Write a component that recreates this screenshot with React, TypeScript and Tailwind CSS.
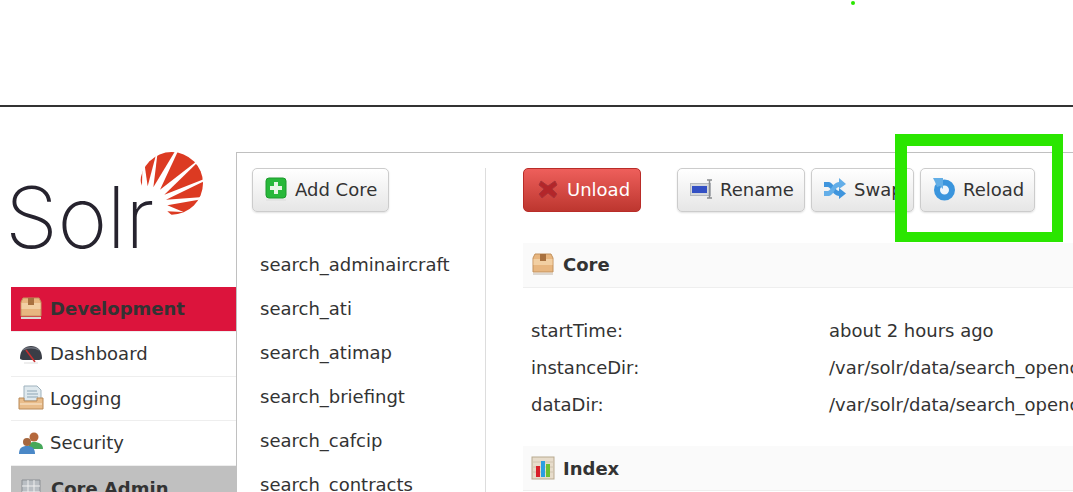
const font = "font-['DejaVu_Sans',sans-serif]";

function BoxIcon() {
  return (
    <svg width="24" height="24" viewBox="0 0 24 24">
      <path d="M2 6 L4 2 H20 L22 6 V20 H2 Z" fill="#e8b67f" stroke="#c2925e" strokeWidth="1" />
      <path d="M2.5 7 H21.5 V13 H2.5 Z" fill="#f2cfa2" />
      <path d="M9 2 H15 V9 H12 L9 9 Z" fill="#a8713f" />
      <path d="M2 22 H22" stroke="#dcd6cf" strokeWidth="2" />
    </svg>
  );
}

function GaugeIcon() {
  return (
    <svg width="26" height="24" viewBox="0 0 26 24">
      <path d="M2 17 C2 9 7 5 13 5 C19 5 24 9 24 17 C24 19 21 19 18 19 H8 C5 19 2 19 2 17 Z" fill="#3a3d46" />
      <path d="M5 9 C9 6 17 6 21 9" stroke="#70747e" strokeWidth="1.5" fill="none" />
      <path d="M8 9 L17 21" stroke="#c93030" strokeWidth="1.5" />
      <path d="M6 22 H20" stroke="#dddddd" strokeWidth="1" />
    </svg>
  );
}

function TrayIcon() {
  return (
    <svg width="26" height="26" viewBox="0 0 26 26">
      <path d="M6 1 H19 L23 5 V16 H6 Z" fill="#dfe9ee" stroke="#9fb2bd" strokeWidth="1" />
      <path d="M9 6 H19 M9 9 H20 M9 12 H20" stroke="#a9bcc7" strokeWidth="1.5" />
      <path d="M1 13 H6 V16 H19 V13 H25 V24 H1 Z" fill="#e9bd8b" stroke="#b98a58" strokeWidth="1" />
      <path d="M2 19 H24" stroke="#f5dcbc" strokeWidth="1.5" />
    </svg>
  );
}

function UsersIcon() {
  return (
    <svg width="26" height="26" viewBox="0 0 26 26">
      <circle cx="16" cy="7" r="4.5" fill="#b5683c" />
      <path d="M10 19 C10 13 13 12 16 12 C21 12 25 14 25 19 Z" fill="#46a85a" />
      <circle cx="9" cy="12" r="4" fill="#a5673f" />
      <path d="M1 24 C1 18 4 16 9 16 C14 16 17 18 17 24 Z" fill="#4a88c7" />
    </svg>
  );
}

function ServersIcon() {
  return (
    <svg width="24" height="24" viewBox="0 0 24 24">
      <path d="M3 3 H21 V24 H3 Z" fill="#b9bec3" stroke="#8b8f94" strokeWidth="1" />
      <path d="M3 9 H21 M3 15 H21 M9 3 V24 M15 3 V24" stroke="#f0f0f0" strokeWidth="1" />
    </svg>
  );
}

function PlusIcon() {
  return (
    <svg width="22" height="24" viewBox="0 0 22 24">
      <rect x="1" y="1" width="20" height="20" rx="3" fill="#28b83a" stroke="#1c9a2c" />
      <path d="M11 5 V17 M5 11 H17" stroke="#e8f6e4" strokeWidth="4" />
      <path d="M1 23 H21" stroke="#dcdcdc" strokeWidth="1" />
    </svg>
  );
}

function CrossIcon() {
  return (
    <svg width="22" height="22" viewBox="0 0 22 22">
      <path d="M4 3 L11 8 L18 3 L20 7 L15 11 L20 16 L17 20 L11 15 L5 20 L2 16 L7 11 L2 7 Z" fill="#b3262a" stroke="#a8343a" strokeWidth="1" />
    </svg>
  );
}

function RenameIcon() {
  return (
    <svg width="24" height="22" viewBox="0 0 24 22">
      <rect x="0.5" y="5.5" width="20" height="12" fill="#d5d8dc" stroke="#b4b9be" />
      <rect x="2" y="8" width="15" height="7" fill="#3350c4" />
      <path d="M17 2 H22 M19.5 2 V20 M17 20 H22" stroke="#8a8d90" strokeWidth="1.5" fill="none" />
    </svg>
  );
}

function SwapIcon() {
  return (
    <svg width="24" height="24" viewBox="0 0 24 24">
      <path d="M1 5 H6 C10 5 12 14 16 14 V11 L23 16.5 L16 22 V19 C10 19 8 10 5 10 H1 Z" fill="#3f95dd" />
      <path d="M1 14 H5 C8 14 10 5 16 5 V1 L23 7 L16 12 V10 C12 10 10 19 6 19 H1 Z" fill="#63aee8" />
    </svg>
  );
}

function ReloadIcon() {
  return (
    <svg width="24" height="24" viewBox="0 0 24 24">
      <circle cx="12.5" cy="13" r="7.5" fill="#eef6fc" stroke="#3a95dd" strokeWidth="6" />
      <path d="M1 1 H11 V12 L8 9 L5 10 L3 5 Z" fill="#62aee6" />
    </svg>
  );
}

function ChartIcon() {
  return (
    <svg width="24" height="24" viewBox="0 0 24 24">
      <rect x="1" y="1" width="22" height="22" fill="#e7dccb" stroke="#b8a98f" />
      <path d="M1 6 H23 M1 11 H23 M1 16 H23" stroke="#d0c4b0" />
      <rect x="5" y="10" width="4" height="11" fill="#d8202a" />
      <rect x="10" y="5" width="4" height="16" fill="#2a9fe0" />
      <rect x="15" y="8" width="4" height="13" fill="#6cc030" />
    </svg>
  );
}

function SolrLogo() {
  return (
    <div className="relative h-[135px] w-[225px]">
      <span className="absolute left-[-6px] top-[16px] font-['Inter',sans-serif] text-[85px] leading-[100px] font-[250] tracking-[-0.5px] text-[#26232e]">
        Solr
      </span>
      {/* sun, drawn in 3x coordinates */}
      <svg className="absolute left-[119px] top-[-4px]" width="80" height="72" viewBox="0 0 240 216">
        <defs>
          <clipPath id="sun">
            <circle cx="125" cy="106" r="94" />
          </clipPath>
        </defs>
        <g fill="#dc3a22" clipPath="url(#sun)">
          <path d="M36 113 L24 78 L37 66 Z" />
          <path d="M53 115 L44 52 L78 20 Z" />
          <path d="M70 118 L84 5 L138 5 Z" />
          <path d="M90 125 L146 5 L200 40 Z" />
          <path d="M103 140 L200 46 L230 90 Z" />
          <path d="M108 155 L230 96 L230 146 Z" />
          <path d="M112 172 L220 153 L180 200 Z" />
          <path d="M112 190 L170 193 L135 210 Z" />
        </g>
      </svg>
    </div>
  );
}

const navItems = [
  { label: "Dashboard", icon: <GaugeIcon />, size: "h-[45px] pb-[2px]" },
  { label: "Logging", icon: <TrayIcon />, size: "h-[44px] pb-[1px]" },
  { label: "Security", icon: <UsersIcon />, size: "h-[45px] pb-[1px]" },
];

const cores = [
  "search_adminaircraft",
  "search_ati",
  "search_atimap",
  "search_briefingt",
  "search_cafcip",
  "search_contracts",
];

const details = [
  ["startTime:", "about 2 hours ago"],
  ["instanceDir:", "/var/solr/data/search_opencalais"],
  ["dataDir:", "/var/solr/data/search_opencalais"],
];

function Btn({ icon, label, className }: { icon: React.ReactNode; label: string; className: string }) {
  return (
    <button className={`flex h-[44px] items-center rounded-[5px] border border-[#cccccc] bg-gradient-to-b from-white to-[#e6e6e6] pb-[2px] text-[18px] text-[#333333] shadow-[0_1px_2px_rgba(0,0,0,0.12)] ${className}`}>
      {icon}
      {label}
    </button>
  );
}

function SectionHead({ icon, label, className }: { icon: React.ReactNode; label: string; className?: string }) {
  return (
    <div className={`flex h-[45px] items-center gap-[8px] border-b border-[#eeeeee] bg-[#fafafa] pl-[8px] text-[18px] font-bold text-[#333333] ${className ?? ""}`}>
      {icon}
      {label}
    </div>
  );
}

export default function App() {
  return (
    <div className={`relative h-[492px] w-[1073px] overflow-hidden bg-white ${font}`}>
      {/* selection marks sit over the page */}
      <div className="absolute left-[851px] top-[1px] h-[4px] w-[4px] rounded-full bg-[#2ae600]" />
      <div className="absolute left-[895px] top-[134px] z-10 h-[108px] w-[168px] border-t-[12px] border-r-[11px] border-b-[10px] border-l-[12px] border-[#2ae600]" />

      <div className="h-[107px] border-b-2 border-[#333333]" />

      <div className="flex pl-[11px] pt-[45px]">
        <aside className="w-[225px] shrink-0">
          <SolrLogo />
          <nav className="text-[18px] text-[#333333]">
            <div className="flex h-[45px] items-center gap-[7px] border-b border-[#eeeeee] bg-[#dc143c] pb-[2px] pl-[8px] font-bold">
              <BoxIcon />
              Development
            </div>
            {navItems.map((item) => (
              <div key={item.label} className={`flex items-center gap-[6px] border-b border-[#eeeeee] pl-[7px] ${item.size}`}>
                {item.icon}
                {item.label}
              </div>
            ))}
            <div className="flex h-[45px] items-center gap-[8px] bg-[#c0c0c0] pl-[8px] font-bold">
              <ServersIcon />
              Core Admin
            </div>
          </nav>
        </aside>

        <main className="flex h-[340px] min-w-0 flex-1 border-l border-t border-[#c0c0c0] pl-[15px] pt-[15px]">
          <div className="mr-[37px] w-[234px] shrink-0 border-r border-[#dddddd]">
            <Btn icon={<PlusIcon />} label="Add Core" className="w-[137px] gap-[8px] pl-[12px]" />
            <ul className="mt-[30px] pl-[8px] text-[18px] text-[#333333]">
              {cores.map((core) => (
                <li key={core} className="flex h-[44px] items-center">
                  {core}
                </li>
              ))}
            </ul>
          </div>

          <div className="min-w-0 flex-1">
            <div className="flex">
              <button className="flex h-[44px] w-[118px] items-center gap-[8px] rounded-[5px] border border-[#b92c28] bg-gradient-to-b from-[#ee5f5b] to-[#bd362f] pb-[2px] pl-[13px] text-[18px] text-white">
                <CrossIcon />
                Unload
              </button>
              <Btn icon={<RenameIcon />} label="Rename" className="ml-[36px] w-[128px] gap-[6px] pl-[12px]" />
              <Btn icon={<SwapIcon />} label="Swap" className="ml-[6px] w-[103px] gap-[7px] pl-[11px]" />
              <Btn icon={<ReloadIcon />} label="Reload" className="ml-[6px] w-[115px] gap-[7px] pl-[11px]" />
            </div>

            <section className="mt-[31px]">
              <SectionHead icon={<BoxIcon />} label="Core" className="pb-[2px]" />
              <dl className="mt-[24px] text-[18px] text-[#333333]">
                {details.map(([key, value]) => (
                  <div key={key} className="flex h-[37px] items-center pl-[8px]">
                    <dt className="w-[298px] shrink-0">{key}</dt>
                    <dd className="whitespace-nowrap">{value}</dd>
                  </div>
                ))}
              </dl>
            </section>

            <section className="mt-[23px]">
              <SectionHead icon={<ChartIcon />} label="Index" />
            </section>
          </div>
        </main>
      </div>
    </div>
  );
}
